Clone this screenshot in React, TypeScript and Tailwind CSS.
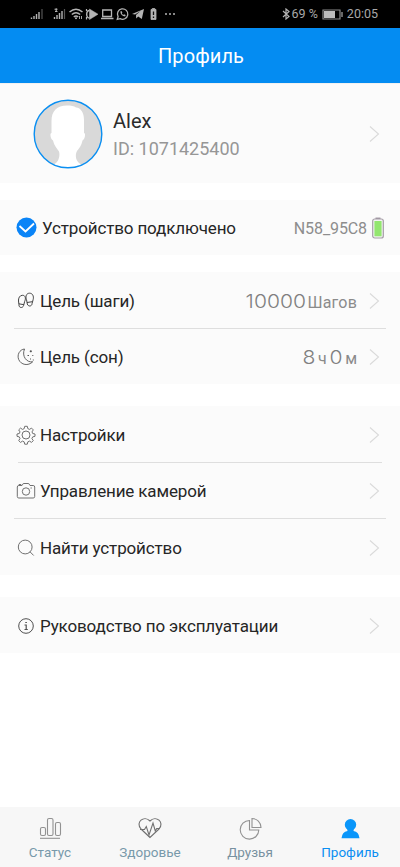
import type { ReactNode } from "react";

function Chevron() {
  return (
    <svg width="11" height="18" viewBox="0 0 11 18" fill="none" stroke="#dadada" strokeWidth="1.1" className="shrink-0">
      <path d="M1 1.500 9.500 9 1 16.500" />
    </svg>
  );
}

function StatusBar() {
  return (
    <div className="flex h-7 items-center bg-black pl-[30px] pr-[22px] text-[#a8a8a8]">
      <svg width="146" height="16" viewBox="30 6 146 16" fill="none" stroke="#b4b4b4" className="shrink-0">
        {/* signal strength, both sims */}
        <path d="M31.500 19v-1.500M34 19v-3M36.500 19v-5M39 19v-7" strokeWidth="1.400" />
        <path d="M42 19V9" stroke="#555555" strokeWidth="1.200" />
        <path d="M54.500 19v-2M57 19v-4M59.500 19v-6M62 19v-8" strokeWidth="1.400" />
        <path d="M64.500 19V9" stroke="#555555" strokeWidth="1.200" />
        <path d="M54.500 9.200h3M55 11.500h2.500M56.200 8.200v3.500" strokeWidth="1.100" />
        {/* wifi */}
        <path d="M69.500 12Q76 6.500 82.500 12M71.800 14.500Q76 11 80.200 14.500M73.800 17Q76 15 78.200 17" strokeWidth="1.500" />
        <circle cx="76" cy="18.300" r="1" fill="#b4b4b4" stroke="none" />
        <path d="M79.500 16v3M81.500 16v3" strokeWidth="0.900" />
        {/* play */}
        <path d="M89.500 9 98 14.200 89.500 19.500Z" fill="#b4b4b4" strokeWidth="0.500" />
        <path d="M89.500 10.500c-3.500 0-4 7.500 0 7.500" strokeWidth="1.400" />
        <path d="M86.500 9v2M86.500 17v2.500" strokeWidth="1.200" />
        {/* laptop */}
        <path d="M102.700 10h8.800v6.500h-8.800zM101 18.500h12.500" strokeWidth="1.300" />
        {/* messenger */}
        <path d="m117.300 19.300.8-2.700a5.200 5.200 0 1 1 2 2z" strokeWidth="1.300" />
        <path d="M120.300 11.500c.2 3 2 4.700 4.800 5l.6-1.500-1.700-.7-.8.6-1.400-1.500.5-.8-.8-1.500z" fill="#b4b4b4" stroke="none" />
        {/* telegram */}
        <path d="m132 14 12-5-2.200 10-3.600-2.500-2 2-.2-3.400 4.500-4.200-5.400 3.700z" fill="#b4b4b4" stroke="none" />
        {/* charging cell */}
        <path d="M151 9.500h1.300V8.500h2.500v1h1.200v10h-5z" fill="#b4b4b4" strokeWidth="0.800" />
        <path d="M153.500 11.500v3.500M153.500 16.500V18" stroke="#111111" strokeWidth="1.300" />
        <path d="M165 14h2M169 14h2M173 14h2" strokeWidth="1.700" />
      </svg>
      <div className="ml-auto flex items-center font-[Roboto,sans-serif] text-[12.500px]">
        <svg width="9" height="12" viewBox="0 0 9 12" fill="none" stroke="#b4b4b4" strokeWidth="1.200">
          <path d="m1 3 6 5.500-3 2.500V1l3 2.500L1 9" />
        </svg>
        <span className="ml-px whitespace-nowrap">69 %</span>
        <svg width="21" height="11" viewBox="0 0 21 11" fill="none" className="ml-1">
          <path d="M1 1h17v9H1z" stroke="#8a8a8a" strokeWidth="1.200" />
          <path d="M2 2h11v7H2z" fill="#bcbcbc" />
          <path d="M20 3v5" stroke="#8a8a8a" strokeWidth="1.500" />
        </svg>
        <span className="ml-1">20:05</span>
      </div>
    </div>
  );
}

function Avatar() {
  return (
    <svg width="70" height="70" viewBox="0 0 70 70" className="shrink-0">
      <circle cx="35" cy="35" r="34" fill="#d9d9d9" />
      <path
        d="M18.500 22C18.500 12 24 6.500 34 6.500c4 0 7 .5 9 2 5 .5 8 5 8 12.500v13c2 0 1 6-1.500 7.500-1 5-3.500 8-5.500 10.500-2 4-1 7.500 0 9.500 1 2 3 3 4 4a34 34 0 0 1-27 0c1-1 3-2 4-4s2-5.500 1-9c-2-3-5-6-6-11-2.500-1.500-3.500-7.500-1.500-7.500z"
        fill="#ffffff"
      />
      <circle cx="35" cy="35" r="33.800" fill="none" stroke="#0a8ff2" strokeWidth="1.400" />
    </svg>
  );
}

function StepsIcon() {
  return (
    <svg width="18" height="18" viewBox="0 0 18 18" fill="none" stroke="#444444" strokeWidth="1">
      <path d="M5.300 3.300c3.200-.2 3.800 3.200 2.400 6L6.600 13.500c-.8 3-5 2.500-4.600-.7L1.500 9C1.300 6 2.700 3.400 5.300 3.300zM1.800 11.800l5.200.9" />
      <path d="M12.500 1.200c-3.200 0-4.200 3.300-3 6.300l.8 4.500c.8 3 4.800 2.500 4.800-.6l1.100-4c.7-3-.4-6.200-3.700-6.200zM10 10.500l5.300-.8" />
    </svg>
  );
}

function MoonIcon() {
  return (
    <svg width="18" height="18" viewBox="0 0 18 18" fill="none" stroke="#555555">
      <path d="M7.500 1C2.500 1.500-.2 7 1.700 11.500c2.300 5.500 9.500 6.800 14 2.300C9.500 14.800 4.500 8 7.500 1z" strokeWidth="0.900" />
      <path d="M12.800 3.300h2M13.800 2.300v2M10.500 7.500H12M15.300 7.500h1M13 11h1M15.800 12h1" strokeWidth="1.200" />
    </svg>
  );
}

function GearIcon() {
  return (
    <svg width="20" height="20" viewBox="0 0 20 20" fill="none" stroke="#707070" strokeWidth="1" strokeLinejoin="round">
      <path d="m8.200 3.600.5-2.300h2.600l.5 2.300 1.700.8 2-1.300 1.800 1.800-1.300 2 .7 1.600 2.300.5v2.300l-2.300.6-.8 1.700 1.400 2-1.800 1.800-2-1.300-1.700.8-.5 2.300H8.700l-.5-2.300-1.700-.8-2 1.300-1.800-1.800 1.300-2-.7-1.700-2.300-.6V9l2.300-.5.7-1.600-1.300-2 1.800-1.800 2 1.300z" />
      <circle cx="10" cy="10" r="4" />
    </svg>
  );
}

function CameraIcon() {
  return (
    <svg width="20" height="20" viewBox="0 0 20 20" fill="none" stroke="#707070" strokeWidth="1" className="shrink-0">
      <path d="M2.800 4.500H6L7.300 2.500h5.400L14 4.500h3.200q1.500 0 1.500 1.500v9.500q0 1.500-1.500 1.500H2.800q-1.500 0-1.500-1.500V6q0-1.500 1.500-1.500zM3 4.300V3.500h2v.8" />
      <circle cx="10" cy="10.500" r="3.700" />
      <path d="M14.500 7h1.300" />
    </svg>
  );
}

function SearchIcon() {
  return (
    <svg width="18" height="18" viewBox="0 0 18 18" fill="none" stroke="#707070" strokeWidth="1">
      <circle cx="8.200" cy="8" r="6.900" />
      <path d="m13 12.800 3.700 3.700" />
    </svg>
  );
}

function InfoIcon() {
  return (
    <svg width="18" height="18" viewBox="0 0 18 18" fill="none" stroke="#505050" strokeWidth="1">
      <circle cx="9" cy="9" r="7.300" />
      <path d="M8.300 5.500h1.600M7.500 8h1.700v4.500M7.500 12.500h3.300" strokeWidth="1.200" />
    </svg>
  );
}

interface RowProps {
  icon: ReactNode;
  label: string;
  children?: ReactNode;
}

function Row({ icon, label, children }: RowProps) {
  return (
    <div className="flex h-14 items-center pl-4 pr-5 pt-0.5">
      <div className="flex w-5 shrink-0 justify-center">{icon}</div>
      <span className="ml-1 whitespace-nowrap pt-px text-[17px] tracking-[-0.14px] text-[#262626]">{label}</span>
      <div className="ml-auto mr-3 flex items-baseline pt-px text-[#8b8b8b]">{children}</div>
      <Chevron />
    </div>
  );
}

// wide, light figures used for goal values
function Figure({ children }: { children: string }) {
  return (
    <span className="inline-block origin-right scale-x-[1.14] font-[Inter,sans-serif] text-[18.500px] font-light text-[#808080]">
      {children}
    </span>
  );
}

function NavItem({ icon, label, color }: { icon: ReactNode; label: string; color: string }) {
  return (
    <div className={`flex w-[100px] flex-col items-center pt-2.5 ${color}`}>
      {icon}
      <span className="mt-px text-[13.500px] leading-5">{label}</span>
    </div>
  );
}

export default function App() {
  return (
    <div className="flex h-[867px] w-[400px] flex-col overflow-hidden bg-white font-[Roboto,sans-serif]">
      <StatusBar />
      <header className="flex h-[55px] items-center justify-center bg-[#048cf2] pl-0.5 text-[20px] tracking-[0.1px] text-white">
        Профиль
      </header>

      {/* User */}
      <section className="flex h-[100px] items-center border-t border-[#f1f1f1] bg-[#fbfbfb] pl-[33px] pr-5">
        <Avatar />
        <div className="ml-2.5 flex flex-col pt-0.5">
          <span className="text-[20px] leading-7 text-[#2b2b2b]">Alex</span>
          <span className="text-[18px] leading-7 text-[#969696]">ID: 1071425400</span>
        </div>
        <div className="ml-auto">
          <Chevron />
        </div>
      </section>

      {/* Connected device */}
      <section className="mt-[17px] flex h-[55px] items-center bg-[#fbfbfb] pl-4 pr-4">
        <svg width="21" height="21" viewBox="0 0 21 21" className="shrink-0">
          <circle cx="10.500" cy="10.500" r="10" fill="#0a84f7" />
          <path d="m3.500 9 6 5.500 8.500-8" fill="none" stroke="#ffffff" strokeWidth="1.800" />
        </svg>
        <span className="ml-[5px] whitespace-nowrap pt-0.5 text-[17px] tracking-[-0.14px] text-[#262626]">
          Устройство подключено
        </span>
        <span className="ml-auto pt-0.5 text-[16px] tracking-[-0.1px] text-[#8d8d8d]">N58_95C8</span>
        <svg width="12" height="22" viewBox="0 0 12 22" className="ml-[5px] shrink-0">
          <path d="M3.500 1.300h5" stroke="#9d939f" strokeWidth="1.500" />
          <rect x="0.700" y="2" width="10.600" height="19" rx="2" fill="#f4f4f4" stroke="#a59da7" strokeWidth="1.200" />
          <rect x="2.400" y="4" width="7.200" height="15.300" fill="#93e66f" />
        </svg>
      </section>

      {/* Goals */}
      <section className="mt-[17px] h-[112px] bg-[#fbfbfb]">
        <Row icon={<StepsIcon />} label="Цель (шаги)">
          <Figure>10000</Figure>
          <span className="ml-px text-[16px] tracking-[0.200px]">Шагов</span>
        </Row>
        <div className="mx-3.5 -mb-px h-px bg-[#dedede]" />
        <Row icon={<MoonIcon />} label="Цель (сон)">
          <Figure>8</Figure>
          <span className="ml-[3px] text-[16px]">ч</span>
          <span className="ml-1">
            <Figure>0</Figure>
          </span>
          <span className="ml-[3px] text-[16px]">м</span>
        </Row>
      </section>

      {/* Actions */}
      <section className="mt-[22px] h-[169px] bg-[#fbfbfb]">
        <Row icon={<GearIcon />} label="Настройки" />
        <div className="mx-[18px] -mb-px h-px bg-[#dedede]" />
        <Row icon={<CameraIcon />} label="Управление камерой" />
        <div className="mx-3.5 h-px bg-[#dedede]" />
        <Row icon={<SearchIcon />} label="Найти устройство" />
      </section>

      <section className="mt-[22px] h-14 bg-[#fbfbfb]">
        <Row icon={<InfoIcon />} label="Руководство по эксплуатации" />
      </section>

      <nav className="mt-auto flex h-[60px] bg-[#f7f7f7]">
        <NavItem
          label="Статус"
          color="text-[#7899aa]"
          icon={
            <svg width="24" height="24" viewBox="0 0 24 24" fill="none" stroke="#929292" strokeWidth="1.100">
              <rect x="2.500" y="10.500" width="5" height="8" rx="1.500" />
              <rect x="9.500" y="1.500" width="5.500" height="17" rx="1.500" />
              <rect x="17.500" y="5.500" width="5" height="13" rx="1.500" />
              <path d="M2 21.300h20" />
            </svg>
          }
        />
        <NavItem
          label="Здоровье"
          color="text-[#7899aa]"
          icon={
            <svg width="26" height="24" viewBox="0 0 26 24" fill="none" stroke="#707070" strokeWidth="1.100">
              <path d="M13 20.500 4 12C-2 5 7-2 13 4c6-6 15 1 9 8z" />
              <path d="M3 12.500h4.500l1.800-3 2.700 8.500 4-12 2.300 8 1.400-2.500H23" />
            </svg>
          }
        />
        <NavItem
          label="Друзья"
          color="text-[#7891a0]"
          icon={
            <svg width="24" height="24" viewBox="0 0 24 24" fill="none" stroke="#929292" strokeWidth="1.100">
              <path d="M11.500 3.500A9.300 9.300 0 1 0 20.800 13h-9.300z" />
              <path d="M14 1.500a9 9 0 0 1 9 9h-9z" />
            </svg>
          }
        />
        <NavItem
          label="Профиль"
          color="text-[#0a8ff2]"
          icon={
            <svg width="24" height="24" viewBox="0 0 24 24" fill="#0a96fa">
              <circle cx="12.500" cy="7.700" r="5.700" />
              <path d="M9 11h7l-.5 3q5.500 1 6 7.300h-18q.5-6.300 6-7.300z" />
            </svg>
          }
        />
      </nav>
    </div>
  );
}
